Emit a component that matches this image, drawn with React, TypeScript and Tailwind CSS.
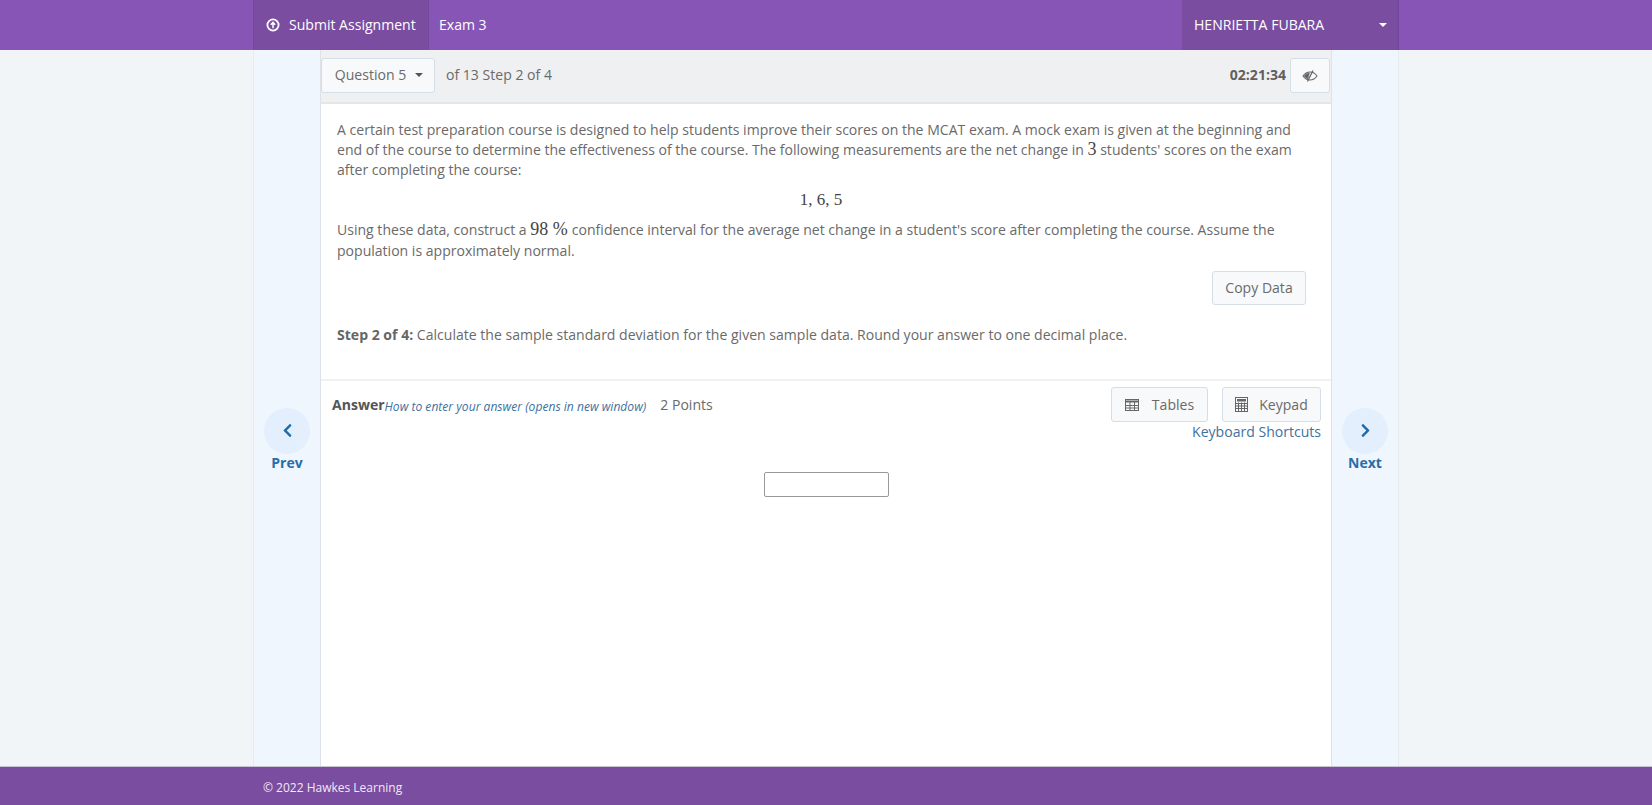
import { FaChevronLeft, FaChevronRight } from "react-icons/fa";

function Caret({ className }: { className: string }) {
  return <span className={`inline-block border-x-[4px] border-t-[4px] border-x-transparent ${className}`} />;
}

function SideNav({ label, children }: { label: string; children: React.ReactNode }) {
  return (
    <div className="w-[66px] shrink-0 bg-[#f0f6fe] flex flex-col items-center pt-[358px]">
      <div className="w-[46px] h-[46px] pb-[2px] rounded-full bg-[#e3effd] flex items-center justify-center text-[#1f6aa8] text-[15px]">
        {children}
      </div>
      <div className="-mt-[1px] text-[14px] leading-[20px] font-bold text-[#2a6ea8]">{label}</div>
    </div>
  );
}

function SubmitIcon() {
  return (
    <svg width="14" height="14" viewBox="0 0 14 14" fill="none" stroke="currentColor">
      <circle cx="7" cy="7" r="5.6" strokeWidth="1.8" />
      <path d="M7 10.2V4.6M4.8 6.8L7 4.4l2.2 2.4" strokeWidth="1.5" />
    </svg>
  );
}

function EyeIcon() {
  return (
    <svg width="16" height="12" viewBox="0 0 16 12" fill="none" stroke="#666666">
      <path d="M1 6C3 3 5.500 2 8 2s5 1 7 4c-2 3-4.500 4-7 4S3 9 1 6z" strokeWidth="1.1" />
      <path d="M2 6C3.500 4 5 3 7.500 3L6 8.800C4.500 8.500 3 7.500 2 6z" fill="#666666" strokeWidth="0.4" />
      <path d="M5.500 11.500L11 0.500" strokeWidth="1.3" />
    </svg>
  );
}

function TableIcon() {
  return (
    <svg width="14" height="12" viewBox="0 0 14 12" fill="none" stroke="#666666" strokeWidth="1">
      <rect x="0.500" y="0.500" width="13" height="11" />
      <path d="M0.500 2.500H13.500" strokeWidth="2" />
      <path d="M0.500 6.500H13.500M0.500 9H13.500M5 3V11.500M9.500 3V11.500" />
    </svg>
  );
}

function KeypadIcon() {
  return (
    <svg width="13" height="15" viewBox="0 0 13 15" fill="none" stroke="#666666" strokeWidth="1">
      <rect x="0.500" y="0.500" width="12" height="14" />
      <rect x="2" y="2" width="9" height="2.500" fill="#666666" stroke="none" />
      <path d="M1 6.500H12M1 9H12M1 11.500H12M3.500 5.500V14M6.500 5.500V14M9.500 5.500V14" />
    </svg>
  );
}

function App() {
  return (
    <div className="h-[805px] flex flex-col bg-[#f1f5f8] font-['Open_Sans',sans-serif] text-[14.05px] leading-[20px] text-[#6a6a6a] overflow-hidden">
      <header className="h-[50px] shrink-0 bg-[#8655b5] flex justify-center text-white">
        <div className="w-[1146px] flex">
          <div className="w-[176px] bg-[#7a4da0] flex items-center pl-[12px] gap-[9px] rounded-b-[2px] border-x border-[#74499a]">
            <SubmitIcon />
            <span>Submit Assignment</span>
          </div>
          <div className="flex-1 flex items-center pl-[10px]">Exam 3</div>
          <div className="w-[217px] bg-[#7a4da0] flex items-center justify-between pl-[12px] pr-[11px] border-r border-[#70469a]">
            <span>HENRIETTA FUBARA</span>
            <Caret className="border-t-white" />
          </div>
        </div>
      </header>

      <div className="flex-1 flex justify-center min-h-0">
        <div className="w-[1146px] flex border-x border-[#e6ebf0]">
          <SideNav label="Prev">
            <FaChevronLeft />
          </SideNav>

          <main className="flex-1 min-w-0 flex flex-col bg-white border-x border-[#dde2e8]">
            <div className="h-[54px] shrink-0 bg-[#eff0f2] border-b-2 border-[#e4e6e9] flex items-center pb-[1px] pr-[1px]">
              <button className="h-[35px] w-[114px] pb-[1px] pl-[2px] bg-[#f8f9fa] border border-[#d5dee6] rounded-[3px] flex items-center justify-center gap-[9px]">
                Question 5
                <Caret className="border-t-[#555555]" />
              </button>
              <span className="ml-[11px] -mt-[2px]">of 13 Step 2 of 4</span>
              <span className="ml-auto mr-[4px] -mt-[1px] font-bold text-[#5f5f5f]">02:21:34</span>
              <button className="h-[35px] w-[40px] bg-[#f8f9fa] border border-[#d5dee6] rounded-[3px] flex items-center justify-center">
                <EyeIcon />
              </button>
            </div>

            <div className="h-[277px] shrink-0 border-b-2 border-[#f0f1f3] px-[16px] pt-[16px]">
              <p>
                A certain test preparation course is designed to help students improve their scores on the MCAT exam. A mock exam is given at the beginning and end of the course to determine the effectiveness of the course. The following measurements are the net change in{" "}
                <span className="font-['Liberation_Serif',serif] text-[18px] leading-[0] text-[#444444]">3</span> students' scores on the exam after completing the course:
              </p>
              <p className="mt-[10px] text-center font-['Liberation_Serif',serif] text-[17px] text-[#444444] pr-[10px]">1, 6, 5</p>
              <p className="mt-[9px] leading-[21px]">
                Using these data, construct a{" "}
                <span className="font-['Liberation_Serif',serif] text-[18px] leading-[0] text-[#444444] mr-[4px]">98 %</span>
                confidence interval for the average net change in a student's score after completing the course. Assume the population is approximately normal.
              </p>
              <div className="mt-[10px] flex justify-end pr-[9px]">
                <button className="w-[94px] h-[34px] bg-[#f8f9fa] border border-[#d5dee6] rounded-[3px]">Copy Data</button>
              </div>
              <p className="mt-[20px]">
                <b className="text-[#666666]">Step 2 of 4:</b> Calculate the sample standard deviation for the given sample data. Round your answer to one decimal place.
              </p>
            </div>

            <div className="flex pl-[11px] pr-[10px] pt-[6px]">
              <div className="flex items-start pt-[8px]">
                <b className="text-[#555555]">Answer</b>
                <i className="text-[12.1px] text-[#41729f] pt-[2px]">How to enter your answer (opens in new window)</i>
                <span className="ml-[14px]">2 Points</span>
              </div>
              <div className="ml-auto flex flex-col items-end">
                <div className="flex gap-[14px]">
                  <button className="w-[97px] h-[35px] bg-[#f8f9fa] border border-[#d5dee6] rounded-[3px] flex items-center justify-center gap-[13px]">
                    <TableIcon />
                    Tables
                  </button>
                  <button className="w-[99px] h-[35px] bg-[#f8f9fa] border border-[#d5dee6] rounded-[3px] flex items-center justify-center gap-[11px]">
                    <KeypadIcon />
                    Keypad
                  </button>
                </div>
                <a className="text-[#41729f]">Keyboard Shortcuts</a>
              </div>
            </div>

            <div className="flex justify-center mt-[30px]">
              <input className="w-[125px] h-[25px] bg-white border border-[#999999] rounded-[2px]" />
            </div>
          </main>

          <SideNav label="Next">
            <FaChevronRight />
          </SideNav>
        </div>
      </div>

      <footer className="h-[39px] shrink-0 bg-[#7a4da0] border-t border-[#c9c4d4] flex justify-center">
        <div className="w-[1146px] pl-[10px] pt-[3px] flex items-center text-[12px] text-[#f0e8f6]">© 2022 Hawkes Learning</div>
      </footer>
    </div>
  );
}

export default App;
